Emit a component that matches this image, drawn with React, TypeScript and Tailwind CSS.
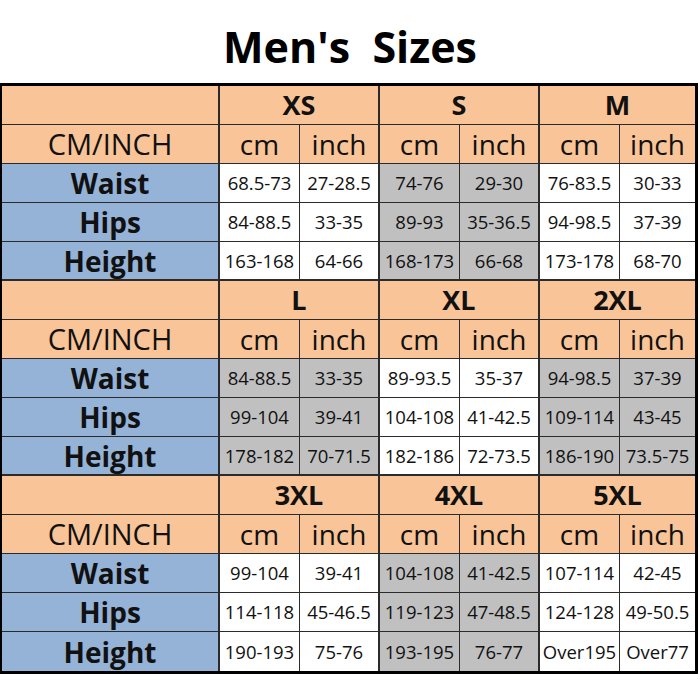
import React from 'react';

type Group = {
  sizes: string[];
  shaded: boolean[];
  rows: { label: string; values: string[] }[];
};

const groups: Group[] = [
  {
    sizes: ['XS', 'S', 'M'],
    shaded: [false, true, false],
    rows: [
      { label: 'Waist', values: ['68.5-73', '27-28.5', '74-76', '29-30', '76-83.5', '30-33'] },
      { label: 'Hips', values: ['84-88.5', '33-35', '89-93', '35-36.5', '94-98.5', '37-39'] },
      { label: 'Height', values: ['163-168', '64-66', '168-173', '66-68', '173-178', '68-70'] },
    ],
  },
  {
    sizes: ['L', 'XL', '2XL'],
    shaded: [true, false, true],
    rows: [
      { label: 'Waist', values: ['84-88.5', '33-35', '89-93.5', '35-37', '94-98.5', '37-39'] },
      { label: 'Hips', values: ['99-104', '39-41', '104-108', '41-42.5', '109-114', '43-45'] },
      { label: 'Height', values: ['178-182', '70-71.5', '182-186', '72-73.5', '186-190', '73.5-75'] },
    ],
  },
  {
    sizes: ['3XL', '4XL', '5XL'],
    shaded: [false, true, false],
    rows: [
      { label: 'Waist', values: ['99-104', '39-41', '104-108', '41-42.5', '107-114', '42-45'] },
      { label: 'Hips', values: ['114-118', '45-46.5', '119-123', '47-48.5', '124-128', '49-50.5'] },
      { label: 'Height', values: ['190-193', '75-76', '193-195', '76-77', 'Over195', 'Over77'] },
    ],
  },
];

const cell = 'flex items-center justify-center h-[39px] border-[#2b2b2b]';

// right border per data column: thick after each size pair
const rightBorder = (col: number) =>
  col === 5 ? '' : col % 2 === 1 ? 'border-r-2' : 'border-r';

const SizeGroup: React.FC<{ group: Group; last: boolean }> = ({ group, last }) => {
  const rowBottom = 'border-b';
  const groupBottom = last ? '' : 'border-b-2';

  return (
    <>
      {/* size names */}
      <div className={`${cell} ${rowBottom} border-r-2 bg-[#f9c497]`} />
      {group.sizes.map((size, i) => (
        <div
          key={size}
          className={`${cell} ${rowBottom} ${i < 2 ? 'border-r-2' : ''} col-span-2 bg-[#f9c497] text-[27px] font-bold`}
        >
          {size}
        </div>
      ))}

      {/* units */}
      <div className={`${cell} ${rowBottom} border-r-2 bg-[#f9c497] text-[29px]`}>CM/INCH</div>
      {[0, 1, 2, 3, 4, 5].map((col) => (
        <div key={col} className={`${cell} ${rowBottom} ${rightBorder(col)} bg-[#f9c497] text-[28px]`}>
          {col % 2 === 0 ? 'cm' : 'inch'}
        </div>
      ))}

      {/* measurements */}
      {group.rows.map((row, r) => {
        const bottom = r === group.rows.length - 1 ? groupBottom : rowBottom;
        return (
          <React.Fragment key={row.label}>
            <div className={`${cell} ${bottom} border-r-2 bg-[#95b3d7] text-[28px] font-bold`}>
              {row.label}
            </div>
            {row.values.map((v, col) => (
              <div
                key={col}
                className={`${cell} ${bottom} ${rightBorder(col)} ${
                  group.shaded[Math.floor(col / 2)] ? 'bg-[#c0c0c0]' : 'bg-white'
                } text-[18.5px]`}
              >
                {v}
              </div>
            ))}
          </React.Fragment>
        );
      })}
    </>
  );
};

export default function App() {
  return (
    <div
      className="w-[700px] h-[700px] bg-white text-[#111]"
      style={{ fontFamily: '"Open Sans", "Noto Sans", sans-serif' }}
    >
      <div className="h-[83px] pt-[25px] text-center text-[43px] font-bold leading-none text-black whitespace-pre">
        {"Men's  Sizes"}
      </div>

      <div className="w-[698px] border-[3px] border-l-2 border-black grid grid-cols-[218px_80px_80px_80px_80px_80px_1fr]">
        {groups.map((g, i) => (
          <SizeGroup key={g.sizes[0]} group={g} last={i === groups.length - 1} />
        ))}
      </div>
    </div>
  );
}
